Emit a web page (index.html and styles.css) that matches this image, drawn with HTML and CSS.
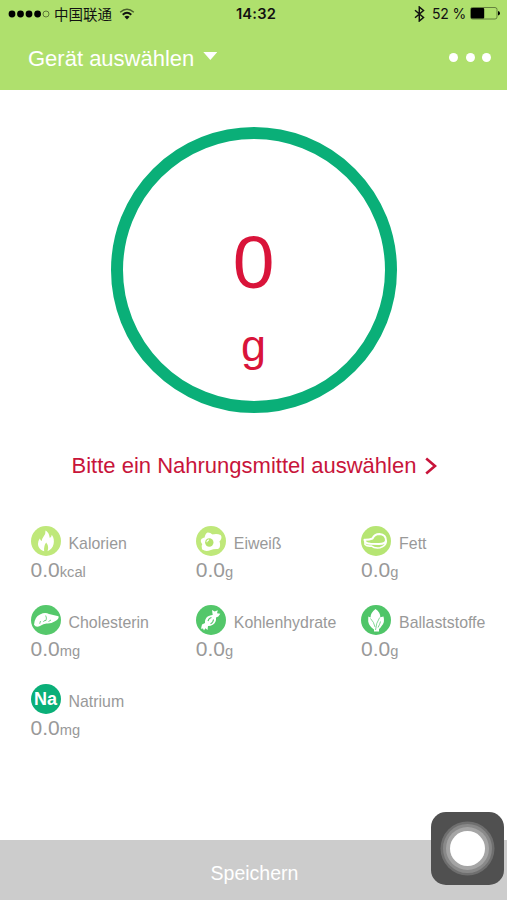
FILE: index.html
```html
<!DOCTYPE html>
<html lang="de">
<head>
<meta charset="utf-8">
<title>Küchenwaage</title>
<link rel="stylesheet" href="styles.css">
</head>
<body>
<div class="app">
  <header class="header">
    <div class="status">
      <div class="carrier">
        <svg class="signal" width="42" height="10" viewBox="0 0 42 10"><circle cx="4" cy="5" r="3.4"/><circle cx="12.5" cy="5" r="3.4"/><circle cx="21" cy="5" r="3.4"/><circle cx="29.6" cy="5" r="3.4"/><circle cx="38" cy="5" r="3" fill="none" stroke="#3b4c22" stroke-width=".7"/></svg>
        <span class="operator">中国联通</span>
        <svg class="wifi" width="16" height="12" viewBox="0 0 16 12" fill="none" stroke="#111" stroke-width="1.9"><path d="M1.2 4.2Q8-1.7 14.8 4.2" stroke="#485e2b" stroke-width="1.4"/><path d="M3.7 6.7Q8 3 12.3 6.7"/><path d="M5.4 8.7Q8 6.900 10.600 8.700L8 11.500Z" fill="#111" stroke="none"/></svg>
      </div>
      <span class="time">14:32</span>
      <div class="power">
        <svg class="bluetooth" width="11" height="16" viewBox="0 0 11 16" fill="none" stroke="#111" stroke-width="1.5"><path d="M1 4.3 9.5 11.5 5.3 15V1L9.5 4.5 1 11.7"/></svg>
        <span class="percent">52 %</span>
        <svg class="battery" width="30" height="13" viewBox="0 0 30 13"><rect x=".5" y=".5" width="26.5" height="11.5" rx="2" fill="none" stroke="#526b31" stroke-width=".8"/><rect x="1" y="1" width="13.2" height="10.5" rx="1"/><path d="M28 4q2 .5 2 2.3T28 8.500Z"/></svg>
      </div>
    </div>
    <div class="nav">
      <div class="device">Gerät auswählen<span class="caret"></span></div>
      <div class="more"><i></i><i></i><i></i></div>
    </div>
  </header>

  <main class="main">
    <div class="dial">
      <div class="weight">0</div>
      <div class="dial-unit">g</div>
    </div>
    <div class="choose">Bitte ein Nahrungsmittel auswählen<svg width="12" height="18" viewBox="0 0 12 18" fill="none" stroke="#c8143a" stroke-width="2.6"><path d="M1.2 1.5 10 9 1.200 16.500"/></svg></div>

    <div class="nutrients">
      <div class="item">
        <div class="name"><svg class="icon" viewBox="0 0 30 30"><circle cx="15" cy="15" r="15" fill="#bfe87a"/><path fill="#fff" d="M14.500 4.500C18 6.500 18.200 9.500 18.800 12Q20.500 11 20.800 8.800C23 11.500 23.200 15 22.600 18 21.900 21.500 19.500 24 16.500 25.200Q18.200 20.500 15.200 16.500 12.500 20 13.200 25.200C9 24 7 21.200 7 17.800Q7.200 14.500 8.800 12.500 9.500 14.500 10.800 15 11 12.500 12.600 10.500 14.800 8 14.500 4.500Z"/></svg><span>Kalorien</span></div>
        <div class="value">0.0<small>kcal</small></div>
      </div>
      <div class="item">
        <div class="name"><svg class="icon" viewBox="0 0 30 30"><circle cx="15" cy="15" r="15" fill="#bfe87a"/><path fill="#fff" stroke="#fff" stroke-width="2" stroke-linejoin="round" d="M12 7.500Q14 7.500 16 9.500 21 8.200 24 9.800 25.500 12 22.500 15.200 24 20.500 21.800 22 17 21.800 14.500 23 10 25 7 22.800 6 20 7.300 18 5 15 6.200 13.500 8 12.500 9.500 12.300 10 8.500 12 7.500Z"/><circle cx="13.300" cy="16.500" r="4.200" fill="#b4e36d"/><path d="M10.800 16.300Q11 14.200 13 13.900" fill="none" stroke="#fff" stroke-width="1.100"/></svg><span>Eiweiß</span></div>
        <div class="value">0.0<small>g</small></div>
      </div>
      <div class="item">
        <div class="name"><svg class="icon" viewBox="0 0 30 30"><circle cx="15" cy="15" r="15" fill="#b6e573"/><g fill="none" stroke="#fff" stroke-linejoin="round"><path stroke-width="2" d="M3.500 13.800Q8 14 11.500 12.500 13.500 8 18.500 8 25 8.500 25 14.500 24.500 18 18 18 13 17.800 9.500 17.800 4 17.500 3.500 13.800Z"/><path stroke-width="1.600" d="M4 15.500V18.500Q6 20.500 10.500 20 13 22.500 19 21.800 25 20 25.300 15"/></g></svg><span>Fett</span></div>
        <div class="value">0.0<small>g</small></div>
      </div>
      <div class="item">
        <div class="name"><svg class="icon" viewBox="0 0 30 30"><circle cx="15" cy="15" r="15" fill="#55c86b"/><path fill="#fff" d="M3 19.800Q3.500 12 9 9.500 14 7 18 9L27.500 11.300Q28.500 14 23.500 16.500 20 19 15.500 18.500 12.500 18.800 9 21 5 22.800 3 19.800Z"/><path d="M14.700 10.500Q16 13 15 15.500M15 15.500Q13 14.800 12.500 17M9.500 16 8.700 18.800M17.500 16.500 20 15" fill="none" stroke="#55c86b" stroke-width=".8"/></svg><span>Cholesterin</span></div>
        <div class="value">0.0<small>mg</small></div>
      </div>
      <div class="item">
        <div class="name"><svg class="icon" viewBox="0 0 30 30"><circle cx="15" cy="15" r="15" fill="#53c76a"/><path fill="#fff" d="M16 5 18.700 6.500 21.800 5.300 21 8.200 24.300 8.800 22.300 11.500 20 12.500Q20.500 17.500 16.800 19.700 14 21.300 12 21L11.500 25 9.400 23.300 8 25.500 7 23.500 5 23.800 6 19.500 9 18Q8.500 14 11.700 11.500 14.500 9.800 16.700 10Z"/><path d="M12 16Q12.800 13 15.500 12.500M14.500 18.700Q17.300 17.500 17.500 14.500" fill="none" stroke="#53c76a" stroke-width="1.100"/></svg><span>Kohlenhydrate</span></div>
        <div class="value">0.0<small>g</small></div>
      </div>
      <div class="item">
        <div class="name"><svg class="icon" viewBox="0 0 30 30"><circle cx="15" cy="15" r="15" fill="#4fc568"/><path fill="#fff" d="M14.500 4Q19.500 7.500 19.300 12.300L22.500 11.500Q24 17 21 20.500 19.500 23 18 24V26.500H13V24.500Q8 21 7.200 16.500L7.300 11.500 9.500 12.500Q9.300 8 14.500 4Z"/><path d="M14.500 25Q15 18 18.700 12.500M14 22Q13 17 9.500 13.500M17 22.500Q19 19 19.500 16.500" fill="none" stroke="#4fc568" stroke-width=".7"/></svg><span>Ballaststoffe</span></div>
        <div class="value">0.0<small>g</small></div>
      </div>
      <div class="item">
        <div class="name"><span class="icon sodium">Na</span><span>Natrium</span></div>
        <div class="value">0.0<small>mg</small></div>
      </div>
    </div>
  </main>

  <footer class="save">Speichern</footer>
  <div class="assist"><span></span></div>
</div>
</body>
</html>
```
FILE: styles.css
```css
* { box-sizing: border-box; }
body {
  margin: 0;
  background: #fff;
  font-family: "Liberation Sans", Arial, sans-serif;
}
svg { display: block; flex: none; }
.app {
  position: relative;
  width: 507px;
  height: 900px;
  display: flex;
  flex-direction: column;
  overflow: hidden;
}
.header {
  height: 90px;
  flex: none;
  background: #afe06d;
}
.status {
  height: 27px;
  padding: 0 7px 0 8px;
  display: grid;
  grid-template-columns: 1fr auto 1fr;
  grid-template-rows: 27px;
  align-items: center;
  color: #111;
  font-family: Inter, "Noto Sans CJK SC", sans-serif;
  font-size: 14.5px;
  line-height: 27px;
}
.carrier, .power { display: flex; align-items: center; height: 27px; }
.power { justify-content: flex-end; }
.operator {
  margin-left: 4px;
  font-family: "Noto Sans CJK SC", sans-serif;
  font-size: 14.5px;
  line-height: 25px;
}
.wifi { margin-left: 7px; }
.time {
  padding: 2px 0 0 4px;
  font-size: 14.7px;
  font-weight: 600;
  line-height: 25px;
  letter-spacing: .2px;
}
.percent { margin: 0 4px 0 7px; font-size: 14px; letter-spacing: -.2px; }
.nav {
  height: 63px;
  padding: 0 16px 0 28px;
  display: flex;
  justify-content: space-between;
  align-items: flex-start;
}
.device {
  display: flex;
  padding-top: 19px;
  font-size: 22px;
  line-height: 25px;
  color: #fff;
}
.caret {
  margin: 6px 0 0 9px;
  width: 14px;
  height: 8px;
  background: #fff;
  clip-path: polygon(0 0, 100% 0, 50% 100%);
}
.more { display: flex; gap: 7.500px; padding-top: 25.500px; }
.more i { width: 9px; height: 9px; border-radius: 50%; background: #fff; }
.main {
  flex: 1;
  display: flex;
  flex-direction: column;
  align-items: center;
}
.dial {
  width: 286px;
  height: 286px;
  flex: none;
  margin-top: 37px;
  border: 12px solid #0aaf78;
  border-radius: 50%;
  display: flex;
  flex-direction: column;
  align-items: center;
  color: #d9143a;
}
.weight {
  margin-top: 83px;
  font-size: 75px;
  line-height: 80px;
}
.dial-unit {
  margin-top: 18px;
  font-size: 45px;
  line-height: 52px;
}
.choose {
  margin: 40px 0 0 2px;
  display: flex;
  align-items: center;
  gap: 9px;
  font-size: 22px;
  line-height: 26px;
  color: #c8143a;
}
.nutrients {
  width: 100%;
  margin-top: 47px;
  padding-left: 30.500px;
  display: grid;
  grid-template-columns: 165.300px 165.300px 1fr;
  grid-auto-rows: 79px;
  color: #999;
}
.name {
  display: flex;
  align-items: center;
  height: 30px;
  gap: 8px;
  font-size: 15.900px;
  line-height: 30px;
}
.name > span:last-child { padding-top: 5px; }
.icon { width: 30px; height: 30px; flex: none; }
.sodium {
  border-radius: 50%;
  background: #0aaf78;
  color: #fff;
  font-size: 18px;
  font-weight: 700;
  line-height: 30px;
  text-align: center;
}
.value {
  font-size: 21px;
  line-height: 28px;
}
.value small { font-size: 14.700px; }
.save {
  height: 60px;
  flex: none;
  padding: 2px 0 0 2px;
  background: #ccc;
  color: #fff;
  font-size: 19.500px;
  line-height: 62px;
  text-align: center;
}
.assist {
  position: absolute;
  left: 431px;
  top: 812px;
  width: 73px;
  height: 73px;
  border-radius: 15px;
  background: #505050;
  display: flex;
  align-items: center;
  justify-content: center;
}
.assist span {
  width: 35px;
  height: 35px;
  border-radius: 50%;
  background: #fff;
  box-shadow: 0 0 0 4px #a5a5a5, 0 0 0 7px #898989, 0 0 0 9.500px #6f6f6f;
}
```
